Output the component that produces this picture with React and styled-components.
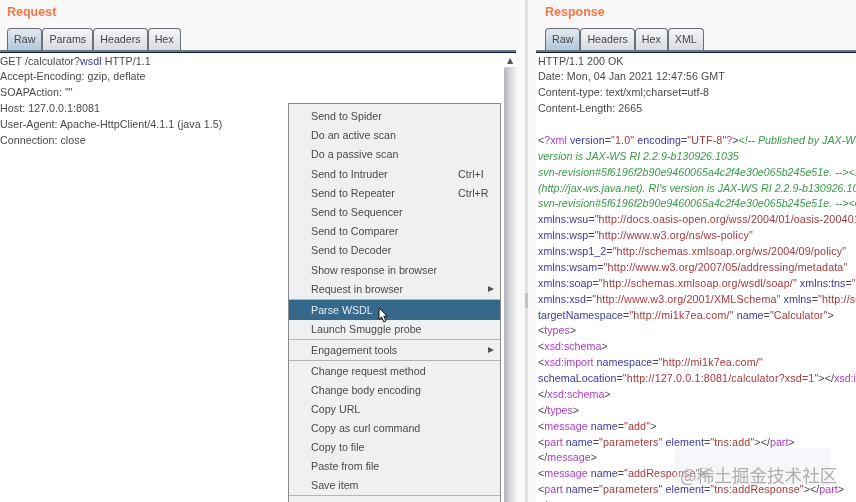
import React from 'react'
import styled, { createGlobalStyle } from 'styled-components'

const GlobalStyle = createGlobalStyle`
  html, body {
    margin: 0;
    padding: 0;
    background: #f8f8f8;
    overflow: hidden;
  }
`

const requestLines = [
  [['GET /calculator?', 'plain'], ['wsdl', 'attr'], [' HTTP/1.1', 'plain']],
  [['Accept-Encoding: gzip, deflate', 'plain']],
  [['SOAPAction: ""', 'plain']],
  [['Host: 127.0.0.1:8081', 'plain']],
  [['User-Agent: Apache-HttpClient/4.1.1 (java 1.5)', 'plain']],
  [['Connection: close', 'plain']],
]

const responseLines = [
  [['HTTP/1.1 200 OK', 'plain']],
  [['Date: Mon, 04 Jan 2021 12:47:56 GMT', 'plain']],
  [['Content-type: text/xml;charset=utf-8', 'plain']],
  [['Content-Length: 2665', 'plain']],
  [['\u00a0', 'plain']],
  [['<', 'plain'], ['?xml', 'tag'], [' version', 'attr'], ['=', 'plain'], ['"1.0"', 'val'], [' encoding', 'attr'], ['=', 'plain'], ['"UTF-8"', 'val'], ['?', 'tag'], ['>', 'plain'], ['<!-- Published by JAX-WS RI (http://jax-ws.java.net).', 'note']],
  [['version is JAX-WS RI 2.2.9-b130926.1035', 'note']],
  [['svn-revision#5f6196f2b90e9460065a4c2f4e30e065b245e51e. --><!-- Generated', 'note']],
  [["(http://jax-ws.java.net). RI's version is JAX-WS RI 2.2.9-b130926.1035", 'note']],
  [['svn-revision#5f6196f2b90e9460065a4c2f4e30e065b245e51e. --><', 'note'], ['definitions', 'tag']],
  [['xmlns:wsu', 'attr'], ['=', 'plain'], ['"http://docs.oasis-open.org/wss/2004/01/oasis-200401-wss"', 'val']],
  [['xmlns:wsp', 'attr'], ['=', 'plain'], ['"http://www.w3.org/ns/ws-policy"', 'val']],
  [['xmlns:wsp1_2', 'attr'], ['=', 'plain'], ['"http://schemas.xmlsoap.org/ws/2004/09/policy"', 'val']],
  [['xmlns:wsam', 'attr'], ['=', 'plain'], ['"http://www.w3.org/2007/05/addressing/metadata"', 'val']],
  [['xmlns:soap', 'attr'], ['=', 'plain'], ['"http://schemas.xmlsoap.org/wsdl/soap/"', 'val'], [' xmlns:tns', 'attr'], ['=', 'plain'], ['"http://mi1k7ea.com/"', 'val']],
  [['xmlns:xsd', 'attr'], ['=', 'plain'], ['"http://www.w3.org/2001/XMLSchema"', 'val'], [' xmlns', 'attr'], ['=', 'plain'], ['"http://schemas.xmlsoap.org/"', 'val']],
  [['targetNamespace', 'attr'], ['=', 'plain'], ['"http://mi1k7ea.com/"', 'val'], [' name', 'attr'], ['=', 'plain'], ['"Calculator"', 'val'], ['>', 'plain']],
  [['<', 'plain'], ['types', 'tag'], ['>', 'plain']],
  [['<', 'plain'], ['xsd:schema', 'tag'], ['>', 'plain']],
  [['<', 'plain'], ['xsd:import', 'tag'], [' namespace', 'attr'], ['=', 'plain'], ['"http://mi1k7ea.com/"', 'val']],
  [['schemaLocation', 'attr'], ['=', 'plain'], ['"http://127.0.0.1:8081/calculator?xsd=1"', 'val'], ['>', 'plain'], ['</', 'plain'], ['xsd:import', 'tag'], ['>', 'plain']],
  [['</', 'plain'], ['xsd:schema', 'tag'], ['>', 'plain']],
  [['</', 'plain'], ['types', 'tag'], ['>', 'plain']],
  [['<', 'plain'], ['message', 'tag'], [' name', 'attr'], ['=', 'plain'], ['"add"', 'val'], ['>', 'plain']],
  [['<', 'plain'], ['part', 'tag'], [' name', 'attr'], ['=', 'plain'], ['"parameters"', 'val'], [' element', 'attr'], ['=', 'plain'], ['"tns:add"', 'val'], ['>', 'plain'], ['</', 'plain'], ['part', 'tag'], ['>', 'plain']],
  [['</', 'plain'], ['message', 'tag'], ['>', 'plain']],
  [['<', 'plain'], ['message', 'tag'], [' name', 'attr'], ['=', 'plain'], ['"addResponse"', 'val'], ['>', 'plain']],
  [['<', 'plain'], ['part', 'tag'], [' name', 'attr'], ['=', 'plain'], ['"parameters"', 'val'], [' element', 'attr'], ['=', 'plain'], ['"tns:addResponse"', 'val'], ['>', 'plain'], ['</', 'plain'], ['part', 'tag'], ['>', 'plain']],
  [['</', 'plain'], ['message', 'tag'], ['>', 'plain']],
]

const menuGroups = [
  [
    { label: 'Send to Spider' },
    { label: 'Do an active scan' },
    { label: 'Do a passive scan' },
    { label: 'Send to Intruder', hint: 'Ctrl+I' },
    { label: 'Send to Repeater', hint: 'Ctrl+R' },
    { label: 'Send to Sequencer' },
    { label: 'Send to Comparer' },
    { label: 'Send to Decoder' },
    { label: 'Show response in browser' },
    { label: 'Request in browser', sub: true },
  ],
  [
    { label: 'Parse WSDL', active: true },
    { label: 'Launch Smuggle probe' },
  ],
  [{ label: 'Engagement tools', sub: true }],
  [
    { label: 'Change request method', tight: true },
    { label: 'Change body encoding', tight: true },
    { label: 'Copy URL', tight: true },
    { label: 'Copy as curl command', tight: true },
    { label: 'Copy to file', tight: true },
    { label: 'Paste from file', tight: true },
    { label: 'Save item', tight: true },
  ],
  [],
]

const EditorLines = ({ lines }) =>
  lines.map((line, i) => (
    <Line key={i}>
      {line.map(([text, kind], j) => (
        <Token key={j} $kind={kind}>{text}</Token>
      ))}
    </Line>
  ))

const Tabs = ({ items }) => (
  <TabStrip>
    {items.map((name, i) => (
      <Tab key={name} $selected={i === 0}>{name}</Tab>
    ))}
  </TabStrip>
)

const App = () => {
  return (
    <Page>
      <GlobalStyle />
      <LeftPane>
        <Title>Request</Title>
        <Tabs items={['Raw', 'Params', 'Headers', 'Hex']} />
        <EditorRow>
          <Editor>
            <EditorLines lines={requestLines} />
          </Editor>
          <ScrollBar>
            <ScrollArrow>▲</ScrollArrow>
            <ScrollThumb />
          </ScrollBar>
        </EditorRow>
        <Menu>
          {menuGroups.map((group, i) => (
            <MenuGroup key={i}>
              {group.map((item) => (
                <MenuItem key={item.label} $active={item.active} $tight={item.tight}>
                  <span>{item.label}</span>
                  {item.hint && <MenuHint>{item.hint}</MenuHint>}
                  {item.sub && <SubArrow />}
                  {item.active && (
                    <Cursor viewBox="0 0 11 16">
                      <path d="M1 1 L1 12.5 L3.6 10 L5.8 15 L8 14 L5.8 9.2 L9.4 9.2 Z" fill="#fff" stroke="#111" strokeWidth="1" />
                    </Cursor>
                  )}
                </MenuItem>
              ))}
            </MenuGroup>
          ))}
        </Menu>
      </LeftPane>
      <Divider>
        <Grip />
      </Divider>
      <RightPane>
        <Title>Response</Title>
        <Tabs items={['Raw', 'Headers', 'Hex', 'XML']} />
        <ResponseEditor>
          <EditorLines lines={responseLines} />
        </ResponseEditor>
      </RightPane>
      <Watermark>@稀土掘金技术社区</Watermark>
    </Page>
  )
}

const tokenColors = {
  plain: '#4a4a4a',
  attr: '#3a3aa6',
  val: '#a8383c',
  tag: '#ac3cc4',
  note: '#3a9a48',
}

const tokenSpacing = {
  plain: '0.04px',
  attr: '0.05px',
  val: '0.16px',
  tag: '0',
  note: '0',
}

const Page = styled.div`
  position: relative;
  display: flex;
  width: 856px;
  height: 502px;
  overflow: hidden;
  background: #f8f8f8;
  font-family: "Liberation Sans", Arial, sans-serif;
  font-size: 10.7px;
  color: #4a4a4a;
  filter: blur(0.3px);
`
const LeftPane = styled.div`
  position: relative;
  display: flex;
  flex-direction: column;
  width: 516px;
  flex-shrink: 0;
`
const RightPane = styled.div`
  display: flex;
  flex-direction: column;
  flex: 1;
  min-width: 0;
  padding-left: 8px;
`
const Title = styled.div`
  height: 28px;
  padding: 5px 0 0 7px;
  box-sizing: border-box;
  font-size: 12.5px;
  font-weight: 700;
  line-height: 15px;
  color: #f7764a;
  ${RightPane} & {
    padding-left: 9px;
  }
`
const TabStrip = styled.div`
  display: flex;
  height: 24px;
  padding-left: 7px;
  box-sizing: border-box;
  border-bottom: 2px solid #66788c;
  ${RightPane} & {
    padding-left: 9px;
  }
`
const Tab = styled.div`
  height: 22px;
  padding: 0 6px;
  box-sizing: border-box;
  border: 1px solid #6a6f75;
  border-bottom: 0;
  border-radius: 4px 4px 0 0;
  line-height: 21px;
  font-size: 10.7px;
  color: #454545;
  background: ${(p) => (p.$selected
    ? 'linear-gradient(#e4ebf0, #b0c7d9)'
    : 'linear-gradient(#f6f6f7, #d8dbe0)')};
`
const EditorRow = styled.div`
  display: flex;
  flex: 1;
  min-height: 0;
  border-top: 1px solid #10202c;
`
const Editor = styled.div`
  flex: 1;
  padding-top: 0.5px;
  background: #fff;
`
const ResponseEditor = styled.div`
  flex: 1;
  background: #fff;
  padding: 0.5px 0 0 2px;
  border-top: 1px solid #10202c;
  white-space: nowrap;
  overflow: hidden;
`
const Line = styled.div`
  height: 15.88px;
  line-height: 15.88px;
  white-space: pre;
`
const Token = styled.span`
  color: ${(p) => tokenColors[p.$kind]};
  font-style: ${(p) => (p.$kind === 'note' ? 'italic' : 'normal')};
  letter-spacing: ${(p) => tokenSpacing[p.$kind]};
`
const ScrollBar = styled.div`
  display: flex;
  flex-direction: column;
  width: 12px;
  background: #e9eaec;
`
const ScrollArrow = styled.div`
  height: 14px;
  background: #fff;
  font-family: "DejaVu Sans", sans-serif;
  font-size: 8px;
  line-height: 15px;
  text-align: center;
  color: #555;
`
const ScrollThumb = styled.div`
  flex: 1;
  border-radius: 3px 3px 0 0;
  background: linear-gradient(90deg, #b0b3b8, #d4d6d9 45%, #eeeff0);
`
const Menu = styled.div`
  position: absolute;
  left: 288px;
  top: 103px;
  width: 211px;
  padding-top: 2px;
  background: #eff0f2;
  border: 1px solid #8a8a8a;
`
const MenuGroup = styled.div`
  padding: 0.5px 0;
  & + & {
    border-top: 1px solid #b4b4b4;
  }
  &:empty {
    height: 20px;
  }
`
const MenuItem = styled.div`
  position: relative;
  display: flex;
  align-items: center;
  height: ${(p) => (p.$tight ? '19px' : '19.2px')};
  padding-left: 22px;
  font-size: 10.7px;
  color: ${(p) => (p.$active ? '#e4eef5' : '#4a4a4a')};
  background: ${(p) => (p.$active ? '#36688c' : 'transparent')};
`
const MenuHint = styled.span`
  position: absolute;
  left: 169px;
`
const SubArrow = styled.i`
  position: absolute;
  right: 6px;
  width: 0;
  height: 0;
  border-left: 6px solid #555;
  border-top: 3.5px solid transparent;
  border-bottom: 3.5px solid transparent;
`
const Cursor = styled.svg`
  position: absolute;
  left: 89px;
  top: 7px;
  width: 11px;
  height: 16px;
`
const Divider = styled.div`
  width: 3px;
  margin-left: 9px;
  flex-shrink: 0;
  background: #e2e2e2;
`
const Grip = styled.div`
  height: 15px;
  margin-top: 293px;
  background: #c2c2c2;
`
const Watermark = styled.div`
  position: absolute;
  left: 675px;
  top: 448px;
  display: flex;
  align-items: flex-end;
  width: 155px;
  height: 37px;
  padding-left: 5px;
  box-sizing: border-box;
  white-space: nowrap;
  font-family: "Noto Sans CJK SC", "Liberation Sans", sans-serif;
  font-size: 17.6px;
  line-height: 20px;
  color: rgba(150, 150, 155, 0.75);
  background: linear-gradient(rgba(224, 224, 242, 0.25), rgba(232, 232, 232, 0.4));
`

export default App
